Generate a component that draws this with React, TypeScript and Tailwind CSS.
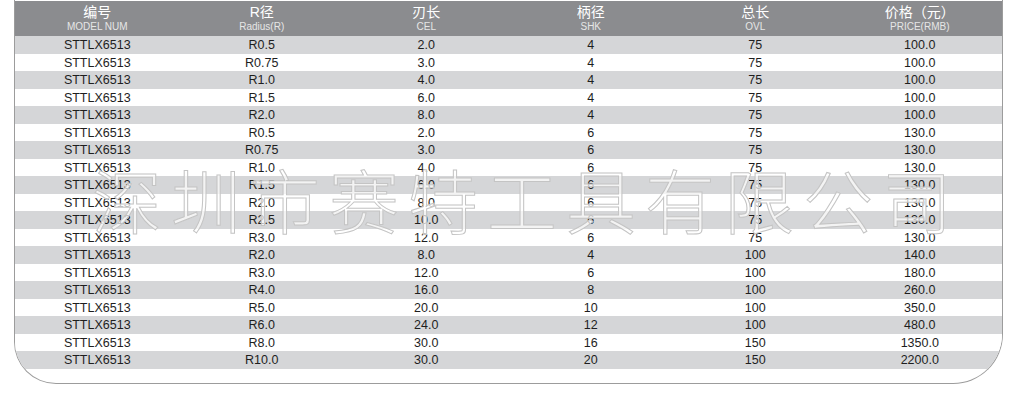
const rows: [string, string, string, string, string][] = [
  ['R0.5', '2.0', '4', '75', '100.0'],
  ['R0.75', '3.0', '4', '75', '100.0'],
  ['R1.0', '4.0', '4', '75', '100.0'],
  ['R1.5', '6.0', '4', '75', '100.0'],
  ['R2.0', '8.0', '4', '75', '100.0'],
  ['R0.5', '2.0', '6', '75', '130.0'],
  ['R0.75', '3.0', '6', '75', '130.0'],
  ['R1.0', '4.0', '6', '75', '130.0'],
  ['R1.5', '6.0', '6', '75', '130.0'],
  ['R2.0', '8.0', '6', '75', '130.0'],
  ['R2.5', '10.0', '6', '75', '130.0'],
  ['R3.0', '12.0', '6', '75', '130.0'],
  ['R2.0', '8.0', '4', '100', '140.0'],
  ['R3.0', '12.0', '6', '100', '180.0'],
  ['R4.0', '16.0', '8', '100', '260.0'],
  ['R5.0', '20.0', '10', '100', '350.0'],
  ['R6.0', '24.0', '12', '100', '480.0'],
  ['R8.0', '30.0', '16', '150', '1350.0'],
  ['R10.0', '30.0', '20', '150', '2200.0'],
];

const headers = [
  ['编号', 'MODEL NUM'],
  ['R径', 'Radius(R)'],
  ['刃长', 'CEL'],
  ['柄径', 'SHK'],
  ['总长', 'OVL'],
  ['价格（元）', 'PRICE(RMB)'],
];

export default function App() {
  return (
    <div className="relative w-[1016px] h-[404px] bg-white overflow-hidden font-['Liberation_Sans','Noto_Sans_CJK_SC',sans-serif]">
      <div className="ml-[14px] w-[989px] h-[384px] border-l border-r border-b border-[#9c9c9c] rounded-bl-[42px] rounded-br-[50px] overflow-hidden">
        {/* header */}
        <div className="grid grid-cols-6 h-[35px] bg-[#8b8c8f] mt-px">
          {headers.map(([cn, en]) => (
            <div key={en} className="flex flex-col items-center pt-[2px]">
              <span className="text-[14px] leading-[18px] text-white">{cn}</span>
              <span className="text-[10px] leading-[11px] text-[#e6e6e6]">{en}</span>
            </div>
          ))}
        </div>
        {/* body */}
        {rows.map((r, i) => (
          <div
            key={i}
            className={`grid grid-cols-6 h-[17.5px] items-center text-[12.5px] text-[#1e1e1e] ${
              i % 2 === 0 ? 'bg-[#d5d6d8]' : 'bg-white'
            }`}
          >
            <span className="text-center">STTLX6513</span>
            {r.map((c, j) => (
              <span key={j} className="text-center">
                {c}
              </span>
            ))}
          </div>
        ))}
      </div>

      {/* watermark */}
      <div className="absolute left-[92px] top-[161px] pointer-events-none text-[70px] leading-[76px] tracking-[9px] text-white/70 [-webkit-text-stroke:1px_#c4c4c4] font-['Noto_Sans_CJK_SC',sans-serif] font-light whitespace-nowrap">
        深圳市赛特工具有限公司
      </div>
    </div>
  );
}
